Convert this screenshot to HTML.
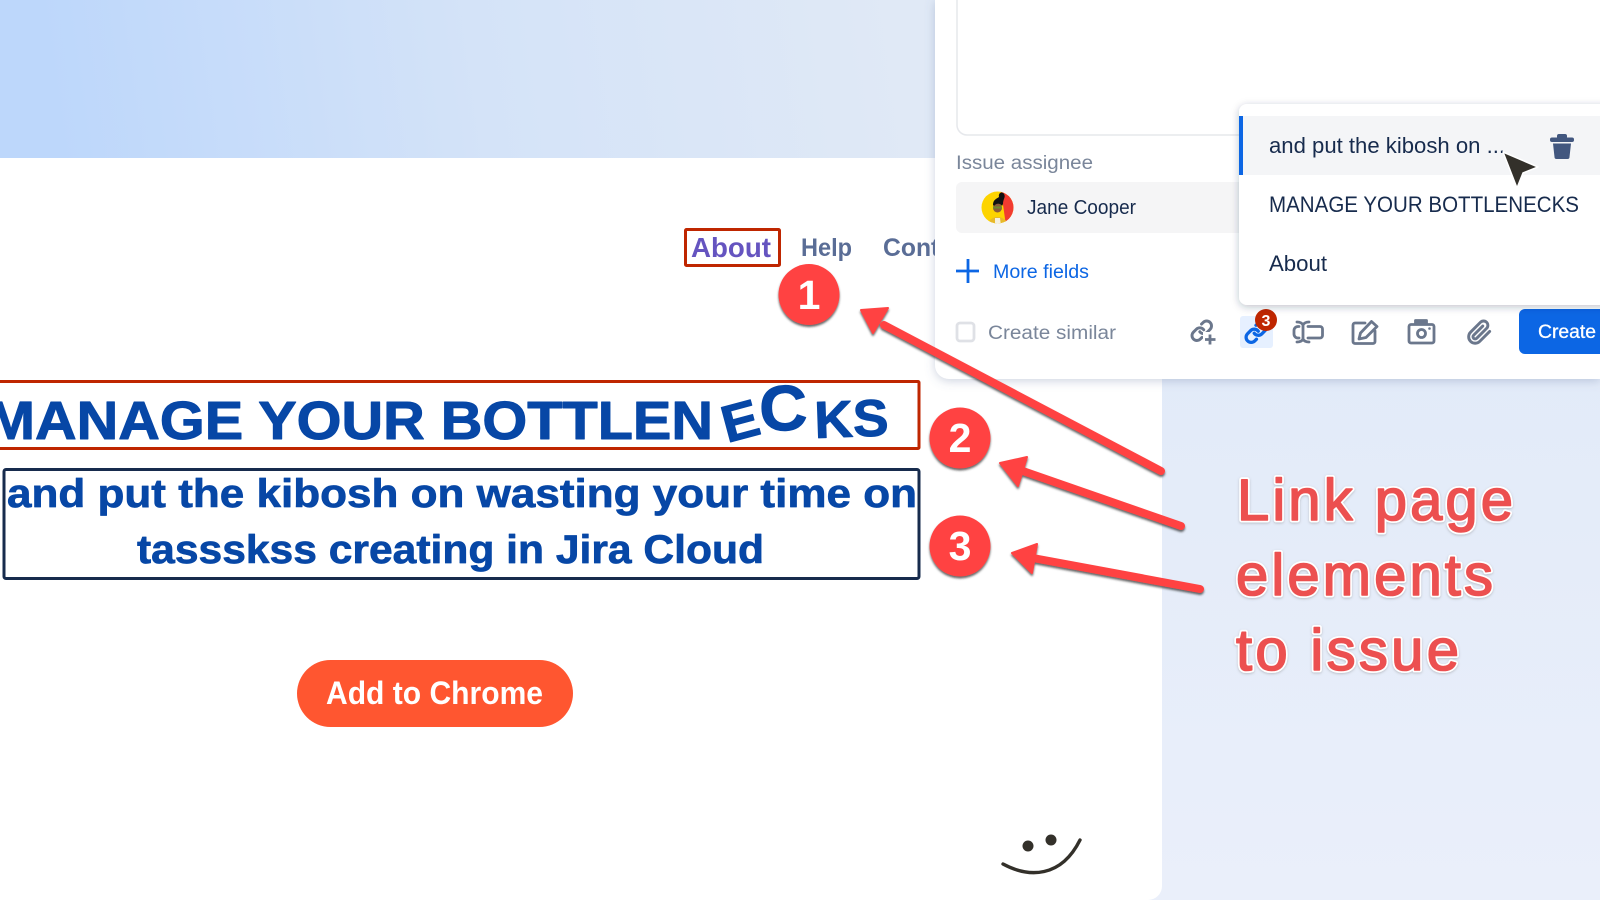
<!DOCTYPE html>
<html lang="en"><head><meta charset="utf-8"><title>Link page elements to issue</title>
<style>
html,body{margin:0;padding:0;width:1600px;height:900px;overflow:hidden;background:#fff}
svg{display:block;position:absolute;left:0;top:0}
text{font-family:"Liberation Sans",Arial,sans-serif}
.b{font-weight:700}
</style></head><body>
<svg width="1600" height="900" viewBox="0 0 1600 900" xmlns="http://www.w3.org/2000/svg">
<defs>
<linearGradient id="top" gradientUnits="userSpaceOnUse" x1="60" y1="140" x2="900" y2="20"><stop offset="0" stop-color="#bdd7fb"/><stop offset="0.5" stop-color="#d4e3f8"/><stop offset="1" stop-color="#e0e9f6"/></linearGradient>
<linearGradient id="rt" x1="0" y1="0" x2="0" y2="1"><stop offset="0" stop-color="#dfe9f8"/><stop offset="1" stop-color="#eaeffa"/></linearGradient>
<filter id="panel" x="-10%" y="-10%" width="120%" height="120%"><feDropShadow dx="0" dy="2" stdDeviation="5" flood-color="#5a6e96" flood-opacity=".3"/></filter>
<filter id="pop" x="-10%" y="-10%" width="120%" height="120%"><feDropShadow dx="0" dy="2" stdDeviation="4" flood-color="#172b4d" flood-opacity=".28"/></filter>
<filter id="sh" x="-20%" y="-20%" width="140%" height="140%"><feDropShadow dx="0" dy="2" stdDeviation="1" flood-color="#333" flood-opacity=".75"/></filter>
<filter id="tsh" x="-5%" y="-5%" width="110%" height="110%"><feDropShadow dx="0" dy="1" stdDeviation="1.2" flood-color="#666" flood-opacity=".35"/></filter>
<clipPath id="av"><circle cx="997.5" cy="207.5" r="16"/></clipPath>
</defs>

<!-- backgrounds -->
<rect x="0" y="0" width="1600" height="158" fill="url(#top)"/>
<rect x="1100" y="158" width="500" height="742" fill="url(#rt)"/>
<path d="M0 158H1162V886a14 14 0 0 1-14 14H0Z" fill="#fff"/>

<!-- nav -->
<rect x="685.500" y="229.500" width="94" height="36" fill="#fff" stroke="#bf2600" stroke-width="3" rx="1"/>
<text class="b" x="691" y="257" font-size="28" fill="#6554c0" textLength="80" lengthAdjust="spacingAndGlyphs">About</text>
<text class="b" x="801" y="256" font-size="25" fill="#5a6d96" textLength="51" lengthAdjust="spacingAndGlyphs">Help</text>
<text class="b" x="883" y="256" font-size="25" fill="#5a6d96" textLength="92" lengthAdjust="spacingAndGlyphs">Contact</text>

<!-- heading -->
<rect x="-6" y="381.500" width="925" height="67" fill="#fff" stroke="#bf2600" stroke-width="3" rx="1"/>
<g fill="#0747a6" stroke="#0747a6" stroke-width="1" stroke-linejoin="round">
<text class="b" x="-13" y="439" font-size="54" textLength="726" lengthAdjust="spacingAndGlyphs">MANAGE YOUR BOTTLEN</text>
<text class="b" transform="translate(727 443) rotate(-15)" font-size="52" textLength="37" lengthAdjust="spacingAndGlyphs">E</text>
<text class="b" transform="translate(760 431) rotate(-2)" font-size="64" textLength="48" lengthAdjust="spacingAndGlyphs">C</text>
<text class="b" transform="translate(815 438) rotate(-2)" font-size="52" textLength="74" lengthAdjust="spacingAndGlyphs">KS</text>
</g>

<!-- subheading -->
<rect x="4" y="469.500" width="915" height="109" fill="#fff" stroke="#172b4d" stroke-width="3" rx="2"/>
<g fill="#0747a6" stroke="#0747a6" stroke-width=".7" stroke-linejoin="round">
<text class="b" x="7" y="507" font-size="40" textLength="910" lengthAdjust="spacingAndGlyphs">and put the kibosh on wasting your time on</text>
<text class="b" x="137" y="563" font-size="40" textLength="627" lengthAdjust="spacingAndGlyphs">tassskss creating in Jira Cloud</text>
</g>

<!-- CTA -->
<rect x="297" y="660" width="276" height="67" rx="33.500" fill="#ff5630"/>
<text class="b" x="326" y="704" font-size="32" fill="#fff" textLength="217" lengthAdjust="spacingAndGlyphs">Add to Chrome</text>

<!-- smile -->
<circle cx="1028" cy="846" r="5.500" fill="#33302a"/><circle cx="1051" cy="840" r="5.500" fill="#33302a"/>
<path d="M1003 864C1029 878 1061 878 1080 840" fill="none" stroke="#33302a" stroke-width="3.400" stroke-linecap="round"/>

<!-- panel -->
<path d="M935 0H1600V379H949a14 14 0 0 1-14-14Z" fill="#fff" filter="url(#panel)"/>
<path d="M957 0V125a10 10 0 0 0 10 10H1245" fill="none" stroke="#e6e8ec" stroke-width="1.500"/>
<text x="956" y="169" font-size="19" fill="#7a869a" textLength="137" lengthAdjust="spacingAndGlyphs">Issue assignee</text>
<rect x="956" y="182" width="300" height="51" rx="6" fill="#f5f5f6"/>
<g clip-path="url(#av)">
<rect x="980" y="190" width="36" height="36" fill="#fdd400"/>
<path d="M1001 190H1016V226H1006Z" fill="#f23b30"/>
<path d="M988 226C988 214 1007 214 1008 226Z" fill="#e8b92a"/>
<path d="M995 218h5l1 8h-6Z" fill="#f5f0e0"/>
<circle cx="997.500" cy="208" r="4.500" fill="#8a5a3c"/>
<path d="M993 205C993 200 996 199 999 197C998 193 1002 191 1004 194C1006 197 1003 199 1003 204L1002 206C1000 203 996 203 994 206Z" fill="#111"/>
<path d="M993 206.500h9v2h-9Z" fill="#6f8a2c"/>
</g>
<text x="1027" y="214" font-size="20" fill="#172b4d" textLength="109" lengthAdjust="spacingAndGlyphs">Jane Cooper</text>
<path d="M956 271H979M968 259V283" stroke="#0c66e4" stroke-width="2.800" fill="none"/>
<text x="993" y="278" font-size="19" fill="#0c66e4" textLength="96" lengthAdjust="spacingAndGlyphs">More fields</text>
<rect x="957" y="323" width="17" height="18" rx="3" fill="#fff" stroke="#dfe1e6" stroke-width="2.800"/>
<text x="988" y="339" font-size="19" fill="#7a869a" textLength="128" lengthAdjust="spacingAndGlyphs">Create similar</text>

<!-- toolbar icons -->
<g fill="none" stroke="#6b778c" stroke-width="2.800" stroke-linecap="round" stroke-linejoin="round">
<g transform="translate(1190 319) scale(.98)" stroke-width="3"><path d="M10 13a5 5 0 0 0 7.540.540l3-3a5 5 0 0 0-7.070-7.070l-1.720 1.710"/><path d="M14 11a5 5 0 0 0-7.540-.540l-3 3a5 5 0 0 0 7.070 7.070l1.710-1.710"/></g>
<rect x="1203" y="332" width="15" height="14" fill="#fff" stroke="none"/>
<path d="M1210 334.500V344.500M1205 339.500H1215.500" stroke-linecap="butt"/>
<path d="M1297 322c3 0 5 1 6 3 1-2 3-3 6-3M1297 342c3 0 5-1 6-3 1 2 3 3 6 3M1303 325V339M1299 326.500H1298a4 4 0 0 0-4 4V334a4 4 0 0 0 4 4H1299M1308 326.500H1320a2.500 2.500 0 0 1 2.500 2.500V335.500a2.500 2.500 0 0 1-2.500 2.500H1308"/>
<path d="M1365 323H1355a2 2 0 0 0-2 2V341.500a2 2 0 0 0 2 2H1373a2 2 0 0 0 2-2V331"/>
<path d="M1359 339L1360.500 333L1371.500 321.500L1377 326.500L1366 337.500Z"/>
<rect x="1409" y="324.500" width="25" height="18.500" rx="2"/>
<path d="M1415.500 323.500V320.500H1426.500V323.500" fill="#6b778c"/>
<circle cx="1421.500" cy="333.500" r="4"/>
<g transform="translate(1466.500 319.500) scale(1.080)" stroke-width="2.700"><path d="M21.440 11.050l-9.190 9.190a6 6 0 0 1-8.490-8.490l9.190-9.190a4 4 0 0 1 5.660 5.660l-9.200 9.190a2 2 0 0 1-2.830-2.830l8.490-8.480"/></g>
</g>
<circle cx="1429.500" cy="328.500" r="1.300" fill="#6b778c"/>
<rect x="1240" y="316" width="33" height="32" rx="3" fill="#e6f0ff"/>
<g transform="translate(1244 320) scale(1.02)" fill="none" stroke="#0c66e4" stroke-width="3.200" stroke-linecap="round"><path d="M10 13a5 5 0 0 0 7.540.540l3-3a5 5 0 0 0-7.070-7.070l-1.720 1.710"/><path d="M14 11a5 5 0 0 0-7.540-.540l-3 3a5 5 0 0 0 7.070 7.070l1.710-1.710"/></g>
<circle cx="1266" cy="320" r="11" fill="#bf2600"/>
<text class="b" x="1266" y="326" font-size="16" fill="#fff" text-anchor="middle">3</text>
<rect x="1519" y="309" width="100" height="45" rx="6" fill="#0c66e4"/>
<text x="1538" y="338" font-size="19" fill="#fff" stroke="#fff" stroke-width=".3" textLength="58" lengthAdjust="spacingAndGlyphs">Create</text>

<!-- popup -->
<rect x="1239" y="104" width="380" height="201" rx="8" fill="#fff" filter="url(#pop)"/>
<rect x="1239" y="116" width="361" height="59" fill="#f4f5f7"/>
<rect x="1239" y="116" width="4" height="59" fill="#0c66e4"/>
<text x="1269" y="153" font-size="22" fill="#172b4d" textLength="236" lengthAdjust="spacingAndGlyphs">and put the kibosh on ...</text>
<text x="1269" y="212" font-size="22" fill="#172b4d" textLength="310" lengthAdjust="spacingAndGlyphs">MANAGE YOUR BOTTLENECKS</text>
<text x="1269" y="271" font-size="22" fill="#172b4d" textLength="58" lengthAdjust="spacingAndGlyphs">About</text>
<g fill="#42577f"><rect x="1550" y="137.500" width="24" height="4.500" rx="2"/><rect x="1557" y="134" width="10" height="5" rx="2"/><path d="M1553 143.500H1571L1569.500 157a2 2 0 0 1-2 2H1556.500a2 2 0 0 1-2-2Z"/></g>
<path d="M1503 152L1538 167L1523 173L1517 188Z" fill="#33302a" stroke="#fff" stroke-width="1.500" stroke-linejoin="round"/>

<!-- annotation arrows -->
<g filter="url(#sh)" fill="#ff4343" stroke="#ff4343" stroke-linejoin="round" stroke-linecap="round">
<path d="M884 325L1161 471" stroke-width="8" fill="none"/>
<path d="M861 310L888 308L873 333Z" stroke-width="2"/>
<path d="M1020 470L1181 526" stroke-width="8" fill="none"/>
<path d="M1000 463L1027 457L1018 486Z" stroke-width="2"/>
<path d="M1033 558L1200 589" stroke-width="8" fill="none"/>
<path d="M1012 553L1037 544L1032 573Z" stroke-width="2"/>
</g>

<!-- numbered markers -->
<g filter="url(#sh)" fill="#ff4343"><circle cx="809" cy="294.500" r="30.500"/><circle cx="960" cy="438" r="30.500"/><circle cx="960" cy="546" r="30.500"/></g>
<g class="b" fill="#fff" text-anchor="middle" font-size="41" font-weight="700">
<text x="809" y="309">1</text><text x="960" y="452">2</text><text x="960" y="560">3</text></g>

<!-- callout -->
<g filter="url(#tsh)" fill="#fff" stroke="#fff" stroke-width="5" stroke-linejoin="round" font-size="58">
<text x="1237" y="520" textLength="276">Link page</text>
<text x="1236" y="595" textLength="257">elements</text>
<text x="1236" y="670" textLength="223">to issue</text>
</g>
<g fill="#ec5050" stroke="#ec5050" stroke-width="1.600" stroke-linejoin="round" font-size="58">
<text x="1237" y="520" textLength="276">Link page</text>
<text x="1236" y="595" textLength="257">elements</text>
<text x="1236" y="670" textLength="223">to issue</text>
</g>
</svg>
</body></html>
